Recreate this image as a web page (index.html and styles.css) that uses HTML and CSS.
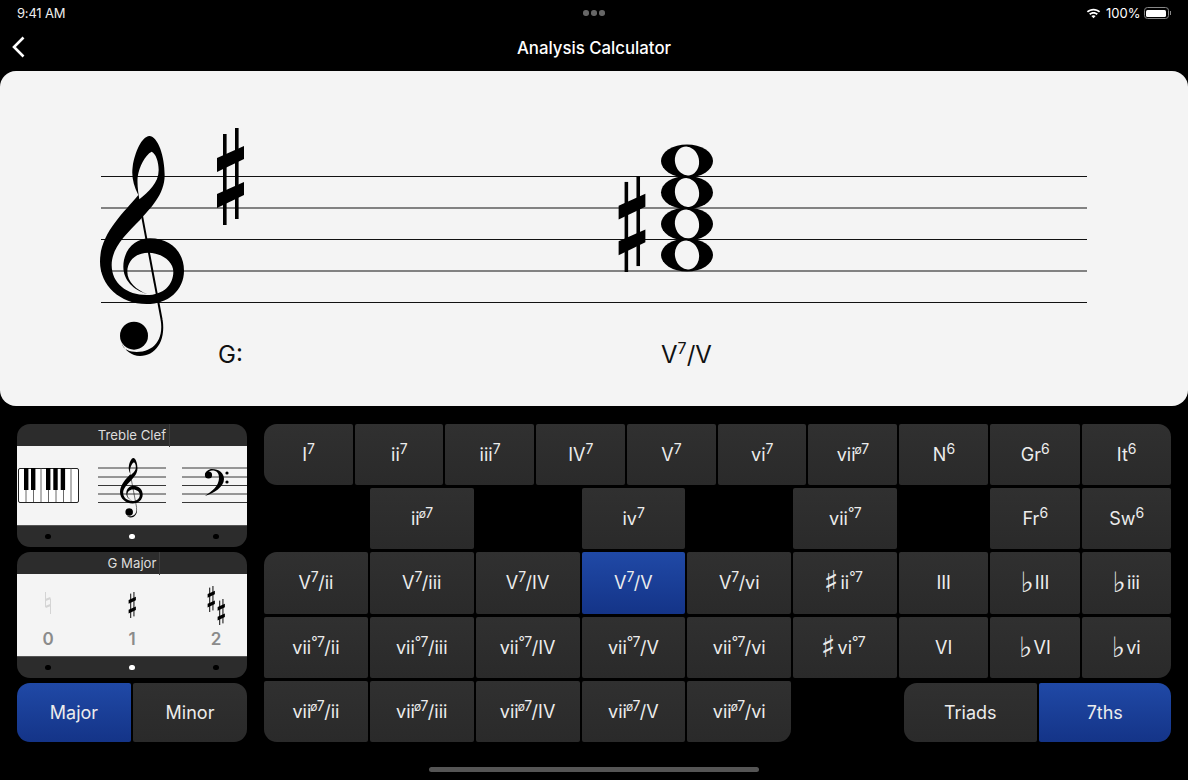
FILE: index.html
```html
<!DOCTYPE html>
<html lang="en">
  <head>
    <meta charset="UTF-8" />
    <meta name="viewport" content="width=device-width, initial-scale=1.0" />
    <title>Analysis Calculator</title>
    <link rel="stylesheet" href="styles.css">
  </head>
  <body>
    <div class="status">
      <span class="time">9:41 AM</span>
      <div class="multitask"><i></i><i></i><i></i></div>
      <div class="status-right">
        <svg class="wifi" width="15" height="12" viewBox="0 0 15 12">
          <path d="M0.8 4.2 C4.4 0.8 10.6 0.8 14.2 4.2 L13 5.5 C10 2.8 5 2.8 2 5.5 Z" />
          <path d="M3.1 6.6 C5.5 4.4 9.5 4.4 11.9 6.6 L10.7 7.9 C8.8 6.3 6.2 6.3 4.3 7.9 Z" />
          <path d="M5.4 9 C6.6 8 8.4 8 9.6 9 L7.5 11.3 Z" />
        </svg>
        <span class="battery-text">100%</span>
        <div class="battery"><div class="battery-fill"></div></div>
        <div class="battery-nub"></div>
      </div>
    </div>

    <div class="nav">
      <svg class="back" width="14" height="22" viewBox="0 0 14 22">
        <path d="M11.5 1.5 L2 11 L11.5 20.5" />
      </svg>
      <span class="title">Analysis Calculator</span>
    </div>

    <div class="sheet">
      <svg class="score" width="1188" height="335" viewBox="0 71 1188 335">
        <defs>
          <symbol id="treble" viewBox="0 0 540 750">
            <path fill-rule="evenodd" d="M172 522 C130 510 100 480 100 440 C100 390 135 355 180 355 C240 355 282 395 282 452 C282 510 235 552 170 552 C90 552 30 495 30 425 C30 340 100 280 145 225 C130 195 124 170 128 140 C135 95 155 50 178 48 C205 50 224 110 224 165 C224 225 180 265 150 300 C105 345 65 385 65 435 C65 490 110 525 170 525 C220 525 250 495 250 455 C250 425 215 398 175 398 C135 398 112 425 112 455 C112 485 140 510 172 522 Z M185 95 C165 105 148 140 143 170 C141 195 145 220 148 238 C175 215 206 190 206 150 C206 125 197 100 185 95 Z" />
            <path class="clef-stem" d="M148 245 L215 600" />
            <path d="M212 600 C222 660 190 696 140 696 C120 696 100 690 95 670 C105 692 125 708 150 708 C195 708 228 665 218 600 Z" />
            <circle cx="132" cy="647" r="42" />
          </symbol>
          <symbol id="sharp" viewBox="0 0 27 97">
            <rect x="6" y="6" width="3.6" height="91" />
            <rect x="18" y="0" width="3.6" height="91" />
            <polygon points="0,30 27,18 27,31 0,44" />
            <polygon points="0,66 27,54 27,67 0,80" />
          </symbol>
        </defs>
        <line class="staff" x1="101" x2="1087" y1="176.5" y2="176.5" />
        <line class="staff" x1="101" x2="1087" y1="208" y2="208" />
        <line class="staff" x1="101" x2="1087" y1="239.5" y2="239.5" />
        <line class="staff" x1="101" x2="1087" y1="271" y2="271" />
        <line class="staff" x1="101" x2="1087" y1="302.5" y2="302.5" />
        <use href="#treble" x="90" y="120" width="180" height="250" />
        <use href="#sharp" x="217" y="128" width="27" height="97" />
        <use href="#sharp" x="618" y="176" width="28" height="96" />
        <ellipse cx="687" cy="161" rx="26" ry="16.5" />
        <ellipse class="hole" cx="687" cy="161" rx="12" ry="14.5" transform="rotate(-12 687 161)" />
        <ellipse cx="687" cy="192.5" rx="26" ry="16.5" />
        <ellipse class="hole" cx="687" cy="192.5" rx="12" ry="14.5" transform="rotate(-12 687 192.5)" />
        <ellipse cx="687" cy="224" rx="26" ry="16.5" />
        <ellipse class="hole" cx="687" cy="224" rx="12" ry="14.5" transform="rotate(-12 687 224)" />
        <ellipse cx="687" cy="255" rx="26" ry="16.5" />
        <ellipse class="hole" cx="687" cy="255" rx="12" ry="14.5" transform="rotate(-12 687 255)" />
        <text class="score-label" x="218" y="363">G:</text>
        <text class="score-label" x="661" y="363">V<tspan class="score-sup" dy="-9">7</tspan><tspan dy="9">/V</tspan></text>
      </svg>
    </div>

    <div class="controls">
      <div class="side">
        <div class="panel clef-panel">
          <div class="panel-head"><span class="head-label">Treble Clef</span></div>
          <div class="panel-body">
            <svg width="84" height="80" viewBox="0 0 84 80">
              <rect class="white-key" x="12.5" y="22.5" width="60" height="34" rx="1.5" />
              <line class="key-line" x1="20" x2="20" y1="22" y2="56" />
              <line class="key-line" x1="27.5" x2="27.5" y1="22" y2="56" />
              <line class="key-line" x1="35" x2="35" y1="22" y2="56" />
              <line class="key-line" x1="42.5" x2="42.5" y1="22" y2="56" />
              <line class="key-line" x1="50" x2="50" y1="22" y2="56" />
              <line class="key-line" x1="57.5" x2="57.5" y1="22" y2="56" />
              <line class="key-line" x1="65" x2="65" y1="22" y2="56" />
              <rect x="18" y="22" width="4.4" height="22" />
              <rect x="25" y="22" width="4.4" height="22" />
              <rect x="40" y="22" width="4.4" height="22" />
              <rect x="47.3" y="22" width="4.4" height="22" />
              <rect x="54.7" y="22" width="4.4" height="22" />
            </svg>
            <svg width="84" height="80" viewBox="0 0 84 80">
              <line class="small-staff" x1="8" x2="76" y1="22" y2="22" />
              <line class="small-staff" x1="8" x2="76" y1="31" y2="31" />
              <line class="small-staff" x1="8" x2="76" y1="39.5" y2="39.5" />
              <line class="small-staff" x1="8" x2="76" y1="48" y2="48" />
              <line class="small-staff" x1="8" x2="76" y1="56.5" y2="56.5" />
              <use href="#treble" x="27.3" y="7.7" width="48.6" height="67.5" />
            </svg>
            <svg width="84" height="80" viewBox="0 0 84 80">
              <line class="small-staff" x1="8" x2="84" y1="22" y2="22" />
              <line class="small-staff" x1="8" x2="84" y1="31" y2="31" />
              <line class="small-staff" x1="8" x2="84" y1="39.5" y2="39.5" />
              <line class="small-staff" x1="8" x2="84" y1="48" y2="48" />
              <line class="small-staff" x1="8" x2="84" y1="56.5" y2="56.5" />
              <path d="M31 30 C31 25 35 23 38 23 C45 23 50 27 50 33 C50 41 40 47 31 50 C38 45 45 40 45 32 C45 27 43 24.5 38 24.5 C36 24.5 34.5 25.5 34 27 Z" />
              <circle cx="34.5" cy="29" r="3.6" />
              <circle cx="53" cy="27" r="1.6" />
              <circle cx="53" cy="36" r="1.6" />
            </svg>
          </div>
          <div class="panel-dots"><i></i><i class="on"></i><i></i></div>
        </div>

        <div class="panel key-panel">
          <div class="panel-head"><span class="head-label">G Major</span></div>
          <div class="panel-body">
            <div class="key-cell">
              <svg width="84" height="55" viewBox="0 0 84 55">
                <path class="natural" d="M39.5 18 V33 M44.5 25 V40" />
                <path class="natural-bar" d="M39.5 26 L44.5 24 M39.5 33 L44.5 31" />
              </svg>
              <span class="key-num">0</span>
            </div>
            <div class="key-cell">
              <svg width="84" height="55" viewBox="0 0 84 55">
                <use href="#sharp" x="38" y="18" width="8.5" height="26" />
              </svg>
              <span class="key-num">1</span>
            </div>
            <div class="key-cell">
              <svg width="84" height="55" viewBox="0 0 84 55">
                <use href="#sharp" x="33" y="12" width="8.5" height="26" />
                <use href="#sharp" x="43" y="25" width="8.5" height="26" />
              </svg>
              <span class="key-num">2</span>
            </div>
          </div>
          <div class="panel-dots"><i></i><i class="on"></i><i></i></div>
        </div>

        <div class="toggle">
          <button class="btn active round-l">Major</button>
          <button class="btn round-r">Minor</button>
        </div>
      </div>

      <div class="pads">
        <div class="pad-row">
          <div class="group seven">
            <button class="btn round-l">I<sup>7</sup></button>
            <button class="btn">ii<sup>7</sup></button>
            <button class="btn">iii<sup>7</sup></button>
            <button class="btn">IV<sup>7</sup></button>
            <button class="btn">V<sup>7</sup></button>
            <button class="btn">vi<sup>7</sup></button>
            <button class="btn">vii<sup><small>ø</small>7</sup></button>
          </div>
          <div class="group three">
            <button class="btn">N<sup>6</sup></button>
            <button class="btn">Gr<sup>6</sup></button>
            <button class="btn round-tr">It<sup>6</sup></button>
          </div>
        </div>

        <div class="pad-row">
          <div class="group six">
            <div></div>
            <button class="btn">ii<sup><small>ø</small>7</sup></button>
            <div></div>
            <button class="btn">iv<sup>7</sup></button>
            <div></div>
            <button class="btn">vii<sup>°7</sup></button>
          </div>
          <div class="group three">
            <div></div>
            <button class="btn">Fr<sup>6</sup></button>
            <button class="btn">Sw<sup>6</sup></button>
          </div>
        </div>

        <div class="pad-row">
          <div class="group six">
            <button class="btn round-tl">V<sup>7</sup>/ii</button>
            <button class="btn">V<sup>7</sup>/iii</button>
            <button class="btn">V<sup>7</sup>/IV</button>
            <button class="btn active">V<sup>7</sup>/V</button>
            <button class="btn">V<sup>7</sup>/vi</button>
            <button class="btn"><span class="acc sharp">♯</span>ii<sup>°7</sup></button>
          </div>
          <div class="group three">
            <button class="btn">III</button>
            <button class="btn"><span class="acc">♭</span>III</button>
            <button class="btn"><span class="acc">♭</span>iii</button>
          </div>
        </div>

        <div class="pad-row">
          <div class="group six">
            <button class="btn">vii<sup>°7</sup>/ii</button>
            <button class="btn">vii<sup>°7</sup>/iii</button>
            <button class="btn">vii<sup>°7</sup>/IV</button>
            <button class="btn">vii<sup>°7</sup>/V</button>
            <button class="btn">vii<sup>°7</sup>/vi</button>
            <button class="btn"><span class="acc sharp">♯</span>vi<sup>°7</sup></button>
          </div>
          <div class="group three">
            <button class="btn">VI</button>
            <button class="btn"><span class="acc">♭</span>VI</button>
            <button class="btn round-br"><span class="acc">♭</span>vi</button>
          </div>
        </div>

        <div class="pad-row">
          <div class="group six">
            <button class="btn round-bl">vii<sup><small>ø</small>7</sup>/ii</button>
            <button class="btn">vii<sup><small>ø</small>7</sup>/iii</button>
            <button class="btn">vii<sup><small>ø</small>7</sup>/IV</button>
            <button class="btn">vii<sup><small>ø</small>7</sup>/V</button>
            <button class="btn round-br">vii<sup><small>ø</small>7</sup>/vi</button>
            <div></div>
          </div>
          <div class="group chord-type">
            <button class="btn round-l">Triads</button>
            <button class="btn active round-r">7ths</button>
          </div>
        </div>
      </div>
    </div>

    <div class="home-bar"></div>
  </body>
</html>
```

FILE: styles.css
```css
* {
  box-sizing: border-box;
}
body {
  margin: 0;
  width: 1188px;
  height: 780px;
  overflow: hidden;
  background-color: #000;
  color: #fff;
  font-family: Inter, "Liberation Sans", sans-serif;
}

.status {
  display: flex;
  align-items: center;
  justify-content: space-between;
  position: relative;
  height: 26px;
  padding: 0 17px;
  font-size: 13px;
}
.time {
  color: #eee;
  letter-spacing: -0.2px;
}
.multitask {
  display: flex;
  gap: 2.5px;
  position: absolute;
  left: 583px;
  top: 10px;
}
.multitask i {
  width: 5.5px;
  height: 5.5px;
  border-radius: 50%;
  background-color: #666;
}
.status-right {
  display: flex;
  align-items: center;
  gap: 5px;
}
.wifi {
  fill: #fff;
}
.battery {
  width: 25px;
  height: 12px;
  margin-left: -2px;
  padding: 1.5px;
  border: 1px solid #888;
  border-radius: 3.5px;
}
.battery-fill {
  height: 100%;
  background-color: #fff;
  border-radius: 1.5px;
}
.battery-nub {
  width: 1.5px;
  height: 4px;
  margin-left: -4px;
  background-color: #888;
}

.nav {
  display: flex;
  align-items: center;
  justify-content: center;
  position: relative;
  height: 45px;
  padding-bottom: 2px;
}
.back {
  position: absolute;
  left: 12px;
  top: 10px;
  fill: none;
  stroke: #fff;
  stroke-width: 2.6;
}
.title {
  font-size: 16.8px;
  font-weight: 500;
}

.sheet {
  height: 335px;
  background-color: #f4f4f4;
  border-radius: 16px;
}
.score {
  display: block;
}
.staff {
  stroke: #111;
  stroke-width: 1.2;
}
.clef-stem {
  fill: none;
  stroke: #000;
  stroke-width: 6;
}
.hole {
  fill: #f4f4f4;
}
.score-label {
  font-size: 24px;
  fill: #111;
}
.score-sup {
  font-size: 16px;
}

.controls {
  display: flex;
  gap: 17px;
  padding: 18px 17px 0;
}
.side {
  display: flex;
  flex-direction: column;
  gap: 5px;
  width: 230px;
}

.panel {
  overflow: hidden;
  background-color: #2c2c2c;
  border-radius: 13px;
}
.clef-panel {
  height: 123px;
}
.key-panel {
  height: 126px;
}
.panel-head {
  display: flex;
  justify-content: center;
  align-items: center;
  height: 22px;
  font-size: 13.2px;
  color: #ddd;
}
.head-label {
  position: relative;
}
.head-label::after {
  content: "";
  position: absolute;
  right: -4px;
  top: -4px;
  bottom: -4px;
  width: 1px;
  background-color: #3e3e3e;
}
.panel-body {
  display: grid;
  grid-template-columns: repeat(3, 84px);
  justify-content: center;
  overflow: hidden;
  background-color: #f4f4f4;
  border-bottom: 1px solid #555;
}
.clef-panel .panel-body {
  height: 80px;
}
.key-panel .panel-body {
  height: 83px;
}
.panel-body svg {
  display: block;
}
.white-key {
  fill: #fff;
  stroke: #222;
  stroke-width: 1;
}
.key-line {
  stroke: #444;
  stroke-width: 0.8;
}
.small-staff {
  stroke: #222;
  stroke-width: 0.9;
}
.natural {
  fill: none;
  stroke: #d4d4d4;
  stroke-width: 1;
}
.natural-bar {
  fill: none;
  stroke: #d4d4d4;
  stroke-width: 2;
}
.key-cell {
  display: flex;
  flex-direction: column;
  align-items: center;
}
.key-num {
  font-size: 17px;
  line-height: 20px;
  font-weight: 600;
  color: #8b8b8b;
}
.panel-dots {
  display: grid;
  grid-template-columns: repeat(3, 84px);
  justify-content: center;
  justify-items: center;
  align-items: center;
  height: 21px;
}
.panel-dots i {
  width: 5.5px;
  height: 5.5px;
  border-radius: 50%;
  background-color: #000;
}
.panel-dots i.on {
  background-color: #fff;
}

.toggle {
  display: grid;
  grid-template-columns: 1fr 1fr;
  gap: 2px;
  height: 59px;
}

.btn {
  padding: 0;
  border: none;
  border-radius: 2px;
  background: linear-gradient(#303030, #2a2a2a);
  color: #ececec;
  font-family: Inter, "Liberation Sans", sans-serif;
  font-size: 18px;
  white-space: nowrap;
}
.btn sup {
  font-size: 14px;
  line-height: 0;
  letter-spacing: -0.6px;
  vertical-align: 7px;
}
.btn small {
  font-size: 12px;
  margin-left: -1px;
}
.btn.active {
  background: linear-gradient(#2049a6, #143488);
}
.acc {
  font-family: "DejaVu Sans", sans-serif;
  font-size: 28px;
  line-height: 0;
  vertical-align: -3px;
  margin-right: 1px;
}
.acc.sharp {
  font-size: 30px;
  vertical-align: -3px;
  margin: 0 2px 0 -4px;
}
.round-l {
  border-radius: 13px 2px 2px 13px;
}
.round-r {
  border-radius: 2px 13px 13px 2px;
}
.round-tl {
  border-top-left-radius: 13px;
}
.round-tr {
  border-top-right-radius: 13px;
}
.round-bl {
  border-bottom-left-radius: 13px;
}
.round-br {
  border-bottom-right-radius: 13px;
}

.pads {
  display: grid;
  grid-auto-rows: 61.2px;
  gap: 3px;
  width: 907px;
}
.pad-row {
  display: grid;
  grid-template-columns: 633px 272px;
  gap: 2px;
}
.group {
  display: grid;
  gap: 2px;
}
.seven {
  grid-template-columns: repeat(7, 1fr);
}
.six {
  grid-template-columns: repeat(6, 1fr);
}
.three {
  grid-template-columns: repeat(3, 1fr);
}
.chord-type {
  grid-template-columns: 1fr 1fr;
  padding-left: 5px;
  margin-top: 2px;
}

.home-bar {
  width: 330px;
  height: 5px;
  margin: 25px auto 0;
  background-color: #555;
  border-radius: 3px;
}
```
